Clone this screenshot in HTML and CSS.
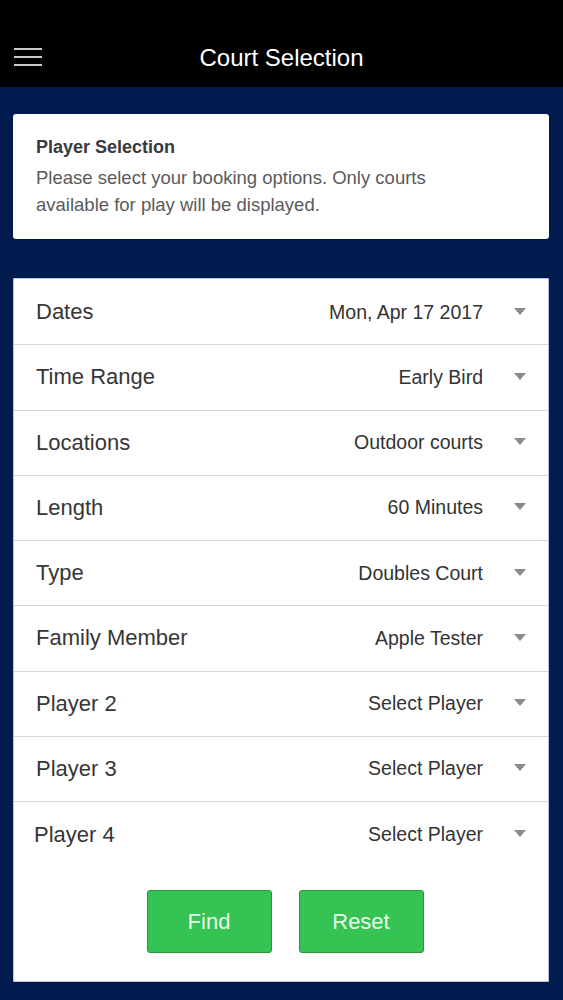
FILE: index.html
```html
<!DOCTYPE html>
<html lang="en">
<head>
  <meta charset="UTF-8">
  <meta name="viewport" content="width=device-width, initial-scale=1.0">
  <title>Court Selection</title>

  <link rel="stylesheet" href="styles.css">
</head>

<body>
  <div class="header">
    <div class="bar">
      <span class="menu">
        <svg width="28" height="20" viewBox="0 0 28 20">
          <rect x="0" y="1" width="28" height="2" fill="#c9c9c9"/>
          <rect x="0" y="9" width="28" height="2" fill="#c9c9c9"/>
          <rect x="0" y="17" width="28" height="2" fill="#c9c9c9"/>
        </svg>
      </span>
      <h1>Court Selection</h1>
    </div>
  </div>

  <div class="content">
    <div class="card intro">
      <h2>Player Selection</h2>
      <p>Please select your booking options. Only courts available for play will be displayed.</p>
    </div>

    <div class="card options">
      <div class="row"><span class="label">Dates</span><span class="value">Mon, Apr 17 2017</span><i class="caret"></i></div>
      <div class="row"><span class="label">Time Range</span><span class="value">Early Bird</span><i class="caret"></i></div>
      <div class="row"><span class="label">Locations</span><span class="value">Outdoor courts</span><i class="caret"></i></div>
      <div class="row"><span class="label">Length</span><span class="value">60 Minutes</span><i class="caret"></i></div>
      <div class="row"><span class="label">Type</span><span class="value">Doubles Court</span><i class="caret"></i></div>
      <div class="row"><span class="label">Family Member</span><span class="value">Apple Tester</span><i class="caret"></i></div>
      <div class="row"><span class="label">Player 2</span><span class="value">Select Player</span><i class="caret"></i></div>
      <div class="row"><span class="label">Player 3</span><span class="value">Select Player</span><i class="caret"></i></div>
      <div class="row last"><span class="label">Player 4</span><span class="value">Select Player</span><i class="caret"></i></div>

      <div class="actions">
        <button class="btn">Find</button>
        <button class="btn">Reset</button>
      </div>
    </div>
  </div>
</body>

</html>
```

FILE: styles.css
```css
/* reset */
*{
  margin: 0;
  padding: 0;
  box-sizing: border-box;
}
html, body{
  background-color: #011b4f;
}
body{
  font-family: "Liberation Sans", Arial, sans-serif;
  color: #333;
  min-height: 1000px;
}

/* top bar */
.header{
  background-color: #000;
  padding-top: 27px;
}
.bar{
  height: 60px;
  display: flex;
  align-items: center;
  justify-content: center;
  position: relative;
}
.menu{
  position: absolute; /* sits over the bar, title stays centred */
  left: 14px;
  top: 20px;
  display: block;
  line-height: 0;
}
.bar h1{
  color: #fff;
  font-size: 24px;
  font-weight: normal;
  padding-top: 2px;
}

.content{
  padding: 27px 14px 18px 13px;
}

.card{
  background-color: #fff;
  border-radius: 3px;
}

/* intro card */
.intro{
  padding: 20px 50px 0 23px;
  height: 125px;
  box-shadow: 0 1px 1px rgba(0,0,0,.3);
}
.intro h2{
  font-size: 18px;
  line-height: 27px;
  font-weight: bold;
  color: #3a3a3a;
}
.intro p{
  margin-top: 3px;
  font-size: 18.5px;
  line-height: 27px;
  color: #5a5a5a;
}

/* option list */
.options{
  margin-top: 39px;
  border: 1px solid #b9c6dd;
  border-radius: 1px;
  padding-top: 1px;
  padding-bottom: 28px;
}
.row{
  display: flex;
  align-items: center;
  height: 65.25px;
  padding: 0 22px 0 22px;
  border-bottom: 1px solid #d6d6d6;
}
.row.last{
  border-bottom: none;
  padding-left: 20px;
}
.label{
  flex: 1;
  font-size: 22px;
  color: #363636;
}
.value{
  font-size: 19.5px;
  color: #333;
}
.caret{
  display: block;
  width: 0;
  height: 0;
  margin-left: 31px;
  margin-top: -2px;
  border-left: 6px solid transparent;
  border-right: 6px solid transparent;
  border-top: 7px solid #8a8a8a;
}

.actions{
  display: flex;
  justify-content: center;
  gap: 27px;
  margin-top: 23px;
  padding-left: 8px;
}
.btn{
  width: 125px;
  height: 63px;
  background-color: #35c354;
  border: 1px solid #27963f;
  border-radius: 3px;
  color: #e9f9ea;
  font-family: "Liberation Sans", Arial, sans-serif;
  font-size: 22px;
}
```
